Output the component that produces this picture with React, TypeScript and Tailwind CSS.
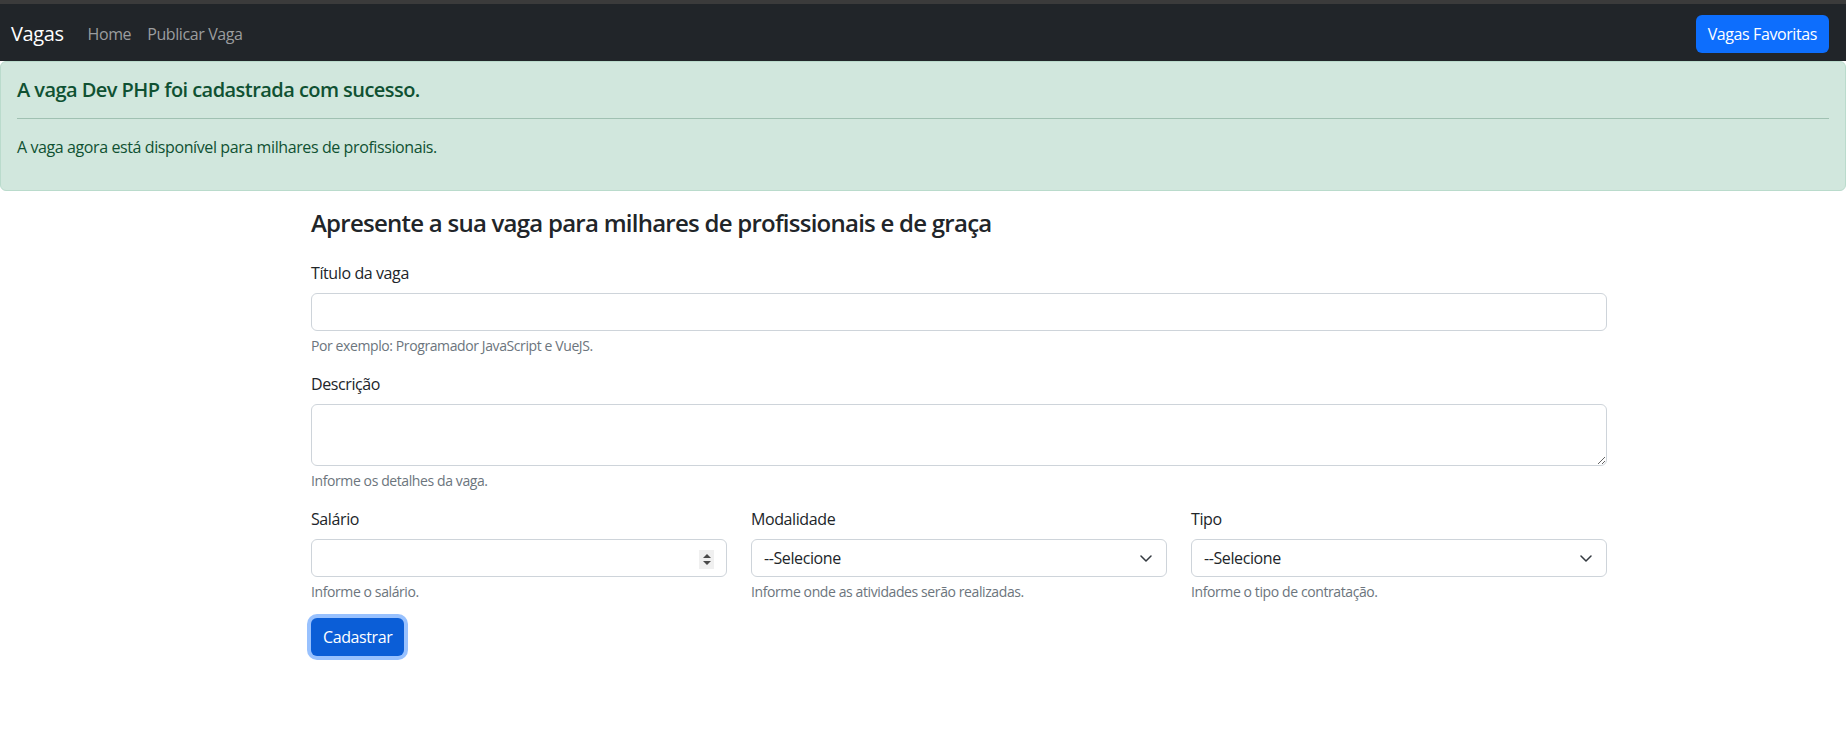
const font = { fontFamily: '"Open Sans", "Noto Sans", "Liberation Sans", sans-serif' };

function Spinner() {
  return (
    <div className="absolute right-[13px] top-[11px] w-[15px] h-[19px] bg-[#f0f0f0] flex flex-col items-center justify-center gap-[3px]">
      <svg width="8" height="4" viewBox="0 0 8 4">
        <path d="M4 0 L8 4 L0 4 Z" fill="#4a4a4a" />
      </svg>
      <svg width="8" height="4" viewBox="0 0 8 4">
        <path d="M0 0 L8 0 L4 4 Z" fill="#4a4a4a" />
      </svg>
    </div>
  );
}

function Chevron() {
  return (
    <svg
      className="absolute right-[15px] top-[16px] pointer-events-none"
      width="12"
      height="7"
      viewBox="0 0 12 7"
      fill="none"
    >
      <path d="M1 1 L6 6 L11 1" stroke="#343a40" strokeWidth="1.5" strokeLinecap="round" strokeLinejoin="round" />
    </svg>
  );
}

function SelectField({ label, help }: { label: string; help: string }) {
  return (
    <div className="flex flex-col">
      <label className="text-[16px] leading-6 mb-2 text-[#212529]">{label}</label>
      <div className="relative">
        <select
          className="w-full h-[38px] appearance-none bg-white border border-[#ced4da] rounded-[6px] pl-3 pr-9 text-[16px] tracking-[-0.4px] text-[#212529] outline-none"
          style={font}
          defaultValue=""
        >
          <option value="">--Selecione</option>
          <option value="1">Presencial</option>
          <option value="2">Remoto</option>
        </select>
        <Chevron />
      </div>
      <div className="mt-1 text-[14px] leading-[21px] text-[#6c757d]">{help}</div>
    </div>
  );
}

export default function App() {
  return (
    <div className="min-h-screen bg-white text-[#212529] tracking-[-0.4px]" style={font}>
      <div className="h-[4px] bg-[#3b3b3b]" />
      <nav className="h-[57px] bg-[#212529] flex items-center pl-[11px] pr-[17px] pt-[2px]">
        <a className="text-[20px] leading-[30px] text-white mr-4">Vagas</a>
        <a className="px-2 text-[16px] leading-6 text-[#9b9d9f]">Home</a>
        <a className="px-2 text-[16px] leading-6 text-[#9b9d9f]">Publicar Vaga</a>
        <button className="ml-auto h-[38px] px-3 rounded-[6px] bg-[#0d6efd] text-white text-[16px]">
          Vagas Favoritas
        </button>
      </nav>

      <div className="border border-[#badbcc] bg-[#d1e7dd] text-[#0f5132] rounded-[6px] px-4 pt-[16px] pb-[15px]">
        <h4 className="text-[20px] leading-6 font-semibold tracking-[-0.55px]">
          A vaga Dev PHP foi cadastrada com sucesso.
        </h4>
        <hr className="my-4 border-0 border-t border-[#0f5132]/25" />
        <p className="text-[16px] leading-6 mb-4">A vaga agora está disponível para milhares de profissionais.</p>
      </div>

      <main className="pl-[311px] pt-[17px]">
        <div className="w-[1296px]">
          <h4 className="text-[24px] leading-[29px] font-semibold tracking-[-0.75px] mb-6">
            Apresente a sua vaga para milhares de profissionais e de graça
          </h4>

          <div className="flex flex-col mb-4">
            <label className="text-[16px] leading-6 mb-2">Título da vaga</label>
            <input
              type="text"
              className="h-[38px] bg-white border border-[#ced4da] rounded-[6px] px-3 text-[16px] outline-none"
            />
            <div className="mt-1 text-[14px] leading-[21px] text-[#6c757d]">
              Por exemplo: Programador JavaScript e VueJS.
            </div>
          </div>

          <div className="flex flex-col mb-4">
            <label className="text-[16px] leading-6 mb-2">Descrição</label>
            <textarea
              rows={2}
              className="h-[62px] bg-white border border-[#ced4da] rounded-[6px] px-3 py-[6px] text-[16px] leading-6 outline-none resize-y"
            />
            <div className="mt-1 text-[14px] leading-[21px] text-[#6c757d]">Informe os detalhes da vaga.</div>
          </div>

          <div className="grid grid-cols-3 gap-x-6 mb-4">
            <div className="flex flex-col">
              <label className="text-[16px] leading-6 mb-2">Salário</label>
              <div className="relative">
                <input
                  type="text"
                  className="w-full h-[38px] bg-white border border-[#ced4da] rounded-[6px] px-3 text-[16px] outline-none"
                />
                <Spinner />
              </div>
              <div className="mt-1 text-[14px] leading-[21px] text-[#6c757d]">Informe o salário.</div>
            </div>
            <SelectField label="Modalidade" help="Informe onde as atividades serão realizadas." />
            <SelectField label="Tipo" help="Informe o tipo de contratação." />
          </div>

          <button className="h-[38px] px-3 rounded-[6px] bg-[#0b5ed7] text-white text-[16px] shadow-[0_0_0_4px_rgba(49,132,253,0.5)]">
            Cadastrar
          </button>
        </div>
      </main>
    </div>
  );
}
